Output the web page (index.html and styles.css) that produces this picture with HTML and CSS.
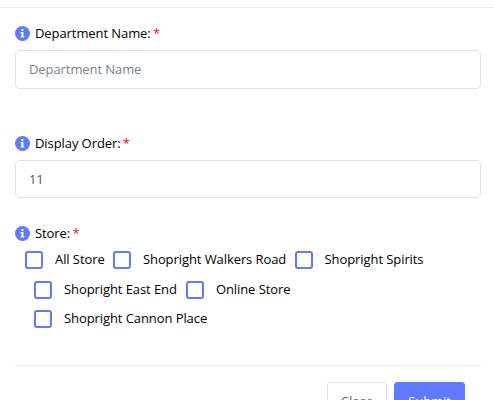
FILE: index.html
```html
<!DOCTYPE html>
<html lang="en">
<head>
<meta charset="utf-8">
<title>Department</title>
<link rel="stylesheet" href="styles.css">
</head>
<body>
<svg width="0" height="0" class="defs">
  <symbol id="info" viewBox="0 0 14 14">
    <circle cx="7" cy="7" r="7" fill="#5f7aff"/>
    <path d="M6 2.8h1.9v1.8H6zM5.3 5.6h2.6v3.9h.8v1.2H5.3V9.5H6V6.8h-.7z" fill="#fff"/>
  </symbol>
</svg>
<form class="modal">
  <div class="body">
    <div class="group">
      <label class="title"><svg class="info"><use href="#info"/></svg>Department Name: <span class="required">*</span></label>
      <input class="control tall" type="text" placeholder="Department Name">
    </div>
    <div class="group order">
      <label class="title"><svg class="info"><use href="#info"/></svg>Display Order: <span class="required">*</span></label>
      <input class="control" type="text" value="11">
    </div>
    <div class="group stores">
      <label class="title"><svg class="info"><use href="#info"/></svg>Store: <span class="required">*</span></label>
      <div class="row first">
        <label class="check"><span class="box"></span>All Store</label>
        <label class="check"><span class="box"></span>Shopright Walkers Road</label>
        <label class="check"><span class="box"></span>Shopright Spirits</label>
      </div>
      <div class="row">
        <label class="check"><span class="box"></span>Shopright East End</label>
        <label class="check"><span class="box"></span>Online Store</label>
      </div>
      <div class="row last">
        <label class="check"><span class="box"></span>Shopright Cannon Place</label>
      </div>
    </div>
  </div>
  <div class="footer">
    <button type="button" class="btn close">Close</button>
    <button type="button" class="btn submit">Submit</button>
  </div>
</form>
</body>
</html>
```
FILE: styles.css
```css
* { box-sizing: border-box; }
html, body { height: 100%; }
body {
  margin: 0;
  overflow: hidden;
  background: #fff;
  color: #000;
  font: 13px/20px "Open Sans", "Noto Sans", sans-serif;
  letter-spacing: -0.08px;
}
.defs { display: none; }
.modal {
  margin-top: 7px;
  border-top: 1px solid #ebedf2;
}
.body { padding: 15px 13px 0 15px; }
.title {
  display: flex;
  align-items: center;
  height: 20px;
  white-space: pre;
}
.info { width: 15px; height: 15px; margin-right: 5px; }
.required { margin-left: -1px; color: #ff0016; }
.control {
  display: block;
  width: 100%;
  height: 38px;
  margin-top: 7px;
  padding: 0 13px;
  border: 1px solid #e2e2ec;
  border-radius: 5px;
  background: #fff;
  color: #55595f;
  font: inherit;
  letter-spacing: inherit;
}
.control.tall { height: 39px; padding-bottom: 1px; }
.control::placeholder { color: #7d7f95; opacity: 1; }
.order { margin-top: 44px; }
.stores { margin-top: 25px; }
.row {
  display: flex;
  gap: 9px;
  height: 30px;
  padding-left: 19px;
}
.row.first { gap: 8.3px; margin-top: 8px; padding-left: 10px; }
.row.last { margin-top: -1px; }
.check {
  display: flex;
  gap: 12px;
  height: 18px;
  line-height: 17px;
  white-space: nowrap;
}
.box {
  width: 18px;
  height: 18px;
  border: 2px solid #5f7aff;
  border-radius: 3px;
}
.footer {
  display: flex;
  justify-content: flex-end;
  gap: 7px;
  margin: 25px 13px 0 15px;
  padding: 16px 16px 0 0;
  border-top: 1px solid #ebebee;
}
.btn {
  height: 38px;
  padding: 0;
  border: 1px solid #e2e2ec;
  border-radius: 3px;
  background: #fff;
  color: #595d6e;
  font: inherit;
  letter-spacing: inherit;
}
.close { width: 60px; }
.submit {
  width: 71px;
  border-color: #5f7aff;
  background: #5f7aff;
  color: #fff;
}
```
